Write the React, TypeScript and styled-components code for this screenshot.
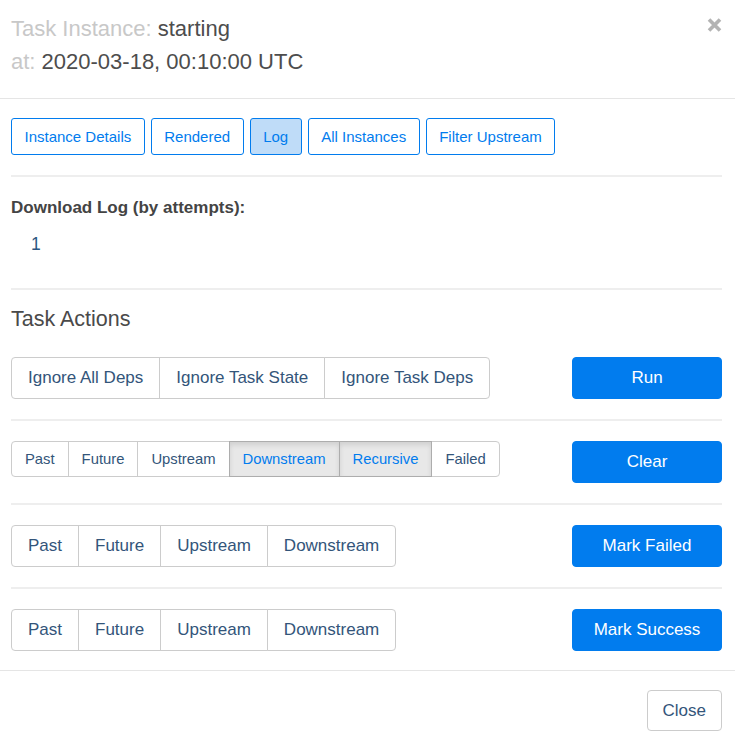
import styled, { createGlobalStyle, css } from 'styled-components';

const GlobalStyle = createGlobalStyle`
  html, body {
    margin: 0;
    padding: 0;
    background: #fff;
  }
  body {
    font-family: 'Liberation Sans', Arial, sans-serif;
    color: #4a4a4a;
  }
  * {
    box-sizing: border-box;
  }
`;

const Modal = styled.div`
  width: 735px;
  background: #fff;
`;

const Header = styled.div`
  display: flex;
  justify-content: space-between;
  align-items: flex-start;
  padding: 12px 13px 20px 11px;
  border-bottom: 1px solid #e5e5e5;
`;

const Title = styled.div`
  font-size: 22px;
  line-height: 33px;
  color: #4d4d4d;
`;

const TitleLabel = styled.span`
  color: #c8c8c8;
`;

const CloseX = styled.button`
  border: 0;
  background: none;
  padding: 0;
  margin-top: 6px;
  width: 15px;
  height: 14px;
  cursor: pointer;
  display: flex;
`;

const Body = styled.div`
  padding: 19px 13px 19px 11px;
`;

const TabBar = styled.div`
  display: flex;
  gap: 6px;
`;

const Tab = styled.button<{ $active?: boolean }>`
  font-family: inherit;
  font-size: 15px;
  line-height: 21px;
  padding: 7px 12.5px;
  border: 1px solid #017cee;
  border-radius: 3px;
  color: #017cee;
  background: ${(p) => (p.$active ? '#bfdcf8' : '#fff')};
  cursor: pointer;
`;

const Divider = styled.div`
  height: 2px;
  background: #eeeeee;
  margin: 20px 0;
`;

const SectionLabel = styled.div`
  font-size: 17px;
  line-height: 22px;
  font-weight: bold;
  color: #444;
`;

const AttemptLink = styled.a`
  display: block;
  margin: 13px 0 32px;
  padding-left: 20px;
  font-size: 17.5px;
  line-height: 24px;
  color: #2b5680;
  text-decoration: none;
`;

const SectionTitle = styled.div`
  font-size: 21.5px;
  line-height: 18px;
  color: #4a4a4a;
  margin: 20px 0 29px;
`;

const ActionRow = styled.div`
  display: flex;
  justify-content: space-between;
  align-items: flex-start;
`;

const SegGroup = styled.div`
  display: inline-flex;
`;

const Seg = styled.button<{ $small?: boolean; $active?: boolean }>`
  font-family: inherit;
  border: 1px solid #cccccc;
  background: #fff;
  color: #33557a;
  cursor: pointer;
  ${(p) =>
    p.$small
      ? css`
          font-size: 14.8px;
          line-height: 20px;
          padding: 7px 13px;
        `
      : css`
          font-size: 17px;
          line-height: 24px;
          padding: 8px 16px;
        `}
  & + & {
    margin-left: -1px;
  }
  &:first-child {
    border-radius: 4px 0 0 4px;
  }
  &:last-child {
    border-radius: 0 4px 4px 0;
  }
  ${(p) =>
    p.$active &&
    css`
      position: relative;
      z-index: 2;
      background: #e8e8e8;
      border-color: #adadad;
      color: #017cee;
      box-shadow: inset 0 3px 5px rgba(0, 0, 0, 0.1);
    `}
`;

const PrimaryButton = styled.button`
  width: 150px;
  font-family: inherit;
  font-size: 17px;
  line-height: 24px;
  padding: 8px 0;
  border: 1px solid #017cee;
  border-radius: 4px;
  background: #017cee;
  color: #fff;
  cursor: pointer;
`;

const Footer = styled.div`
  display: flex;
  justify-content: flex-end;
  padding: 19px 13px 15px 11px;
  border-top: 1px solid #e5e5e5;
`;

const CloseButton = styled.button`
  font-family: inherit;
  font-size: 17px;
  line-height: 23px;
  padding: 8px 15px;
  border: 1px solid #cccccc;
  border-radius: 4px;
  background: #fff;
  color: #33557a;
  cursor: pointer;
`;

interface SegItem {
  label: string;
  active?: boolean;
}

function SegmentGroup({ items, small }: { items: SegItem[]; small?: boolean }) {
  return (
    <SegGroup>
      {items.map((it) => (
        <Seg key={it.label} $small={small} $active={it.active}>
          {it.label}
        </Seg>
      ))}
    </SegGroup>
  );
}

const tabs = ['Instance Details', 'Rendered', 'Log', 'All Instances', 'Filter Upstream'];
const markItems: SegItem[] = [
  { label: 'Past' },
  { label: 'Future' },
  { label: 'Upstream' },
  { label: 'Downstream' },
];

export default function App() {
  return (
    <>
      <GlobalStyle />
      <Modal>
        <Header>
          <Title>
            <div>
              <TitleLabel>Task Instance: </TitleLabel>starting
            </div>
            <div>
              <TitleLabel>at: </TitleLabel>2020-03-18, 00:10:00 UTC
            </div>
          </Title>
          <CloseX aria-label="Close">
            <svg width="15" height="14" viewBox="0 0 15 14">
              <path d="M2 1.5 L13 12.5 M13 1.5 L2 12.5" stroke="#b3b3b3" strokeWidth="3.6" strokeLinecap="butt" />
            </svg>
          </CloseX>
        </Header>
        <Body>
          <TabBar>
            {tabs.map((t) => (
              <Tab key={t} $active={t === 'Log'}>
                {t}
              </Tab>
            ))}
          </TabBar>
          <Divider />
          <SectionLabel>Download Log (by attempts):</SectionLabel>
          <AttemptLink href="#">1</AttemptLink>
          <Divider />
          <SectionTitle>Task Actions</SectionTitle>
          <ActionRow>
            <SegmentGroup
              items={[{ label: 'Ignore All Deps' }, { label: 'Ignore Task State' }, { label: 'Ignore Task Deps' }]}
            />
            <PrimaryButton>Run</PrimaryButton>
          </ActionRow>
          <Divider />
          <ActionRow>
            <SegmentGroup
              small
              items={[
                { label: 'Past' },
                { label: 'Future' },
                { label: 'Upstream' },
                { label: 'Downstream', active: true },
                { label: 'Recursive', active: true },
                { label: 'Failed' },
              ]}
            />
            <PrimaryButton>Clear</PrimaryButton>
          </ActionRow>
          <Divider />
          <ActionRow>
            <SegmentGroup items={markItems} />
            <PrimaryButton>Mark Failed</PrimaryButton>
          </ActionRow>
          <Divider />
          <ActionRow>
            <SegmentGroup items={markItems} />
            <PrimaryButton>Mark Success</PrimaryButton>
          </ActionRow>
        </Body>
        <Footer>
          <CloseButton>Close</CloseButton>
        </Footer>
      </Modal>
    </>
  );
}
